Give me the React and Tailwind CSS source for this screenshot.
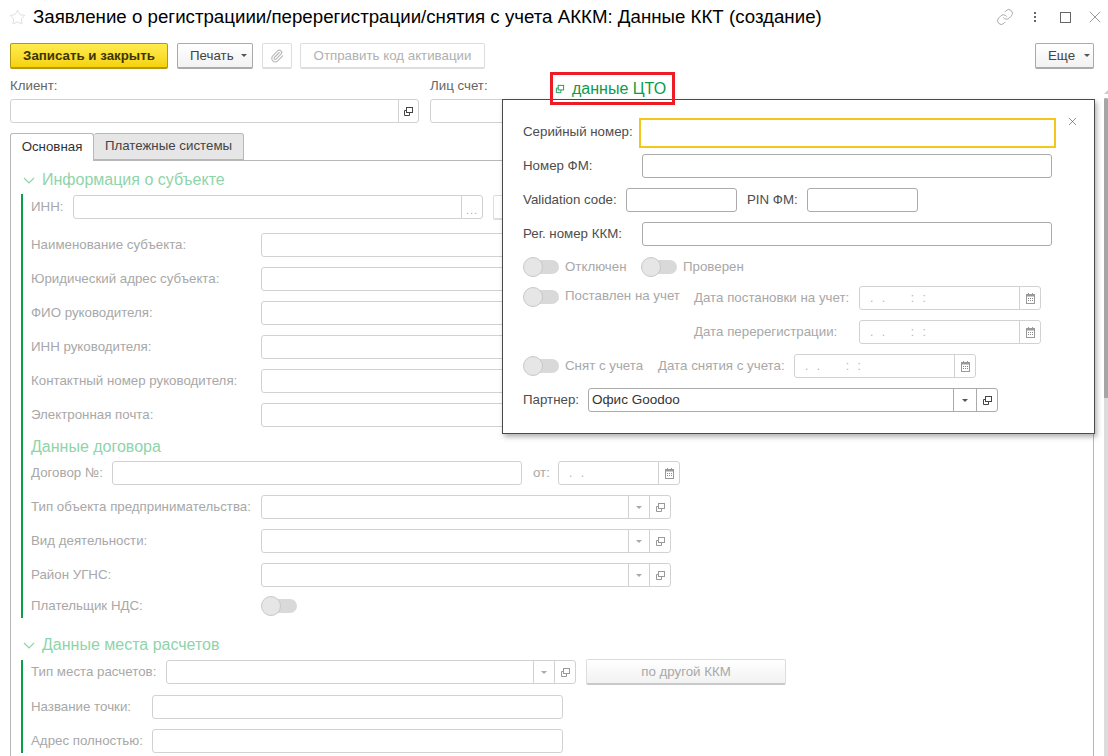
import React from "react";
import { Link, Paperclip, X, Star } from "lucide-react";

const OpenIcon = ({ c = "#444", s = 11 }) => (
  <svg width={s} height={s} viewBox="0 0 11 11" fill="none" stroke={c} strokeWidth="1">
    <rect x="3.5" y="1.5" width="6" height="5" />
    <path d="M3.5 4.5H1.5V9.5H6.5V6.5" />
  </svg>
);
const Caret = ({ c = "#555" }) => (
  <svg width="6" height="3" viewBox="0 0 6 3"><path d="M0 0H6L3 3Z" fill={c} /></svg>
);
const Cal = () => (
  <svg width="9" height="11" viewBox="0 0 9 11" fill="none">
    <rect x="0.5" y="1.5" width="8" height="9" fill="#fff" stroke="#999" />
    <rect x="0.5" y="1.5" width="8" height="2" fill="#999" />
    <path d="M2.5 0V2M6.5 0V2" stroke="#999" />
    <path d="M2 5.5H3M4 5.5H5M6 5.5H7M2 7.5H3M4 7.5H5M6 7.5H7" stroke="#888" />
  </svg>
);
const Chevron = () => (
  <svg width="12" height="7" viewBox="0 0 12 7" fill="none" stroke="#8fd4aa" strokeWidth="1.2"><path d="M1 1L6 6L11 1" /></svg>
);

const Label = ({ children, className = "" }) => (
  <span className={`text-[13.3px] leading-4 whitespace-nowrap text-[#a8a8a8] ${className}`}>{children}</span>
);
const DarkLabel = ({ children, className = "" }) => (
  <span className={`text-[13.3px] leading-4 whitespace-nowrap text-[#4d4d4d] ${className}`}>{children}</span>
);

const DisabledField = ({ className = "", children }) => (
  <div className={`h-6 shrink-0 flex justify-end border border-[#d2d2d2] rounded-[3px] bg-white ${className}`}>{children}</div>
);
const DPart = ({ w = "w-[21px]", children }) => (
  <div className={`${w} h-full flex items-center justify-center border-l border-[#d2d2d2]`}>{children}</div>
);
const EnabledField = ({ className = "", children }) => (
  <div className={`h-6 shrink-0 flex items-center border border-[#ababab] rounded-[3px] bg-white ${className}`}>{children}</div>
);

const Toggle = ({ className = "" }) => (
  <div className={`relative shrink-0 w-[36px] h-5 flex items-center ${className}`}>
    <div className="w-[35px] h-[14px] ml-px rounded-full bg-[#d9d9d9]" />
    <div className="absolute left-0 top-0 w-5 h-5 rounded-full bg-[#e6e6e6] border border-[#c8c8c8]" />
  </div>
);

const DateEmpty = ({ className = "" }) => (
  <DisabledField className={className}>
    <span className="flex-1 pl-[10px] text-[12px] leading-[22px] text-[#b5b5b5] tracking-[2.5px] whitespace-pre">{". .    : :"}</span>
    <DPart><Cal /></DPart>
  </DisabledField>
);

const SelectRow = ({ label, labelW = "w-[230px]", w = "w-[410px]" }) => (
  <div className="flex items-center h-6">
    <Label className={labelW}>{label}</Label>
    <DisabledField className={w}>
      <div className="flex-1" />
      <DPart><Caret c="#aaa" /></DPart>
      <DPart><OpenIcon c="#999" /></DPart>
    </DisabledField>
  </div>
);
const TextRow = ({ label }) => (
  <div className="flex items-center h-6">
    <Label className="w-[230px]">{label}</Label>
    <DisabledField className="w-[600px]" />
  </div>
);

function Popup() {
  return (
    <div className="absolute left-[502px] top-[99px] w-[593px] h-[335px] bg-white border border-[#4a4a4a] shadow-[2px_3px_5px_rgba(0,0,0,0.3)] z-10 pl-[20px] pt-[18px]">
      <button className="absolute left-[563px] top-[15px] text-[#555]"><X size={13} strokeWidth={1.2} /></button>
      <div className="flex items-center h-[30px]">
        <DarkLabel className="w-[116px] -mt-[2px]">Серийный номер:</DarkLabel>
        <div className="w-[417px] h-[30px] border-2 border-[#f5c71a] bg-white" />
      </div>
      <div className="flex items-center mt-[6px] h-6">
        <DarkLabel className="w-[119px]">Номер ФМ:</DarkLabel>
        <EnabledField className="w-[410px]" />
      </div>
      <div className="flex items-center mt-[10px] h-6">
        <DarkLabel className="w-[103px]">Validation code:</DarkLabel>
        <EnabledField className="w-[111px]" />
        <DarkLabel className="ml-[10px] w-[60px]">PIN ФМ:</DarkLabel>
        <EnabledField className="w-[111px]" />
      </div>
      <div className="flex items-center mt-[10px] h-6">
        <DarkLabel className="w-[119px]">Рег. номер ККМ:</DarkLabel>
        <EnabledField className="w-[410px]" />
      </div>
      <div className="flex items-center mt-[11px] h-5">
        <Toggle />
        <Label className="ml-[6px] w-[76px]">Отключен</Label>
        <Toggle />
        <Label className="ml-[6px]">Проверен</Label>
      </div>
      <div className="flex items-start mt-[10px]">
        <Toggle />
        <Label className="ml-[6px] w-[129px] mt-[1px]">Поставлен на учет</Label>
        <div>
          <div className="flex items-center h-6 mt-[-1px]">
            <Label className="w-[165px]">Дата постановки на учет:</Label>
            <DateEmpty className="w-[182px]" />
          </div>
          <div className="flex items-center h-6 mt-[10px]">
            <Label className="w-[165px]">Дата перерегистрации:</Label>
            <DateEmpty className="w-[182px]" />
          </div>
        </div>
      </div>
      <div className="flex items-center mt-[10px] h-6">
        <Toggle />
        <Label className="ml-[6px] w-[93px]">Снят с учета</Label>
        <Label className="w-[136px]">Дата снятия с учета:</Label>
        <DateEmpty className="w-[182px]" />
      </div>
      <div className="flex items-center mt-[10px] h-6">
        <DarkLabel className="w-[65px]">Партнер:</DarkLabel>
        <EnabledField className="w-[410px]">
          <span className="flex-1 pl-[3px] pt-px text-[13.5px] text-[#333]">Офис Goodoo</span>
          <div className="w-[23px] h-full flex items-center justify-center border-l border-[#ababab]"><Caret /></div>
          <div className="w-[21px] h-full flex items-center justify-center border-l border-[#ababab]"><OpenIcon /></div>
        </EnabledField>
      </div>
    </div>
  );
}

export default function App() {
  return (
    <div className="relative w-[1108px] h-[756px] overflow-hidden bg-white font-['Liberation_Sans',Arial,sans-serif]">
      {/* title */}
      <div className="flex items-center h-[34px] pl-[9px] pr-[3px]">
        <Star size={17} strokeWidth={1} className="text-[#d0d0d0]" />
        <h1 className="ml-[7px] text-[18.7px] leading-[22px] text-black font-normal whitespace-nowrap">
          Заявление о регистрациии/перерегистрации/снятия с учета АККМ: Данные ККТ (создание)
        </h1>
        <div className="ml-auto flex items-center">
          <Link size={18} strokeWidth={1.1} className="text-[#999]" />
          <div className="ml-[20px] flex flex-col gap-[2px]">
            <i className="block w-[2px] h-[2px] bg-[#666]" />
            <i className="block w-[2px] h-[2px] bg-[#666]" />
            <i className="block w-[2px] h-[2px] bg-[#666]" />
          </div>
          <div className="ml-[24px] w-[11px] h-[11px] border border-[#666]" />
          <X size={20} strokeWidth={0.8} className="ml-[14px] text-[#666]" />
        </div>
      </div>
      {/* toolbar */}
      <div className="flex items-center h-[26px] mt-[9px] pl-[10px] pr-[14px]">
        <button className="w-[158px] h-[26px] rounded-[2px] border border-[#b09a14] border-b-2 bg-linear-to-b from-[#ffec4d] to-[#f6d200] text-[13.3px] font-bold text-[#3d3500]">Записать и закрыть</button>
        <button className="ml-[9px] w-[76px] h-[26px] flex items-center pl-[12px] gap-[7px] rounded-[2px] border border-[#aaa] border-b-2 bg-linear-to-b from-white to-[#f2f2f2] text-[13.3px] text-[#444]">Печать <Caret /></button>
        <button className="ml-[9px] w-[30px] h-[26px] flex items-center justify-center rounded-[2px] border border-[#ddd] border-b-2 bg-white text-[#bbb]"><Paperclip size={14} /></button>
        <button className="ml-[8px] w-[185px] h-[26px] rounded-[2px] border border-[#ddd] border-b-2 bg-white text-[13.3px] text-[#b0b0b0]">Отправить код активации</button>
        <button className="ml-auto w-[59px] h-[26px] flex items-center pl-[12px] gap-[9px] rounded-[2px] border border-[#aaa] border-b-2 bg-linear-to-b from-white to-[#f2f2f2] text-[13.3px] text-[#444]">Еще <Caret /></button>
      </div>
      {/* client row */}
      <div className="flex pl-[10px] gap-[11px] mt-[9px]">
        <div className="w-[409px]">
          <DarkLabel className="block text-[#666]">Клиент:</DarkLabel>
          <DisabledField className="mt-[5px] w-[409px]"><DPart w="w-[20px]"><OpenIcon /></DPart></DisabledField>
        </div>
        <div className="w-[300px]">
          <DarkLabel className="block text-[#666]">Лиц счет:</DarkLabel>
          <DisabledField className="mt-[5px] w-[300px]" />
        </div>
      </div>
      {/* tabs */}
      <div className="flex ml-[10px] mt-[10px] h-[28px] relative z-[1]">
        <div className="w-[84px] h-[28px] flex items-center justify-center pb-[2px] border border-b-0 border-[#b8b8b8] rounded-t-[3px] bg-white text-[13.3px] text-[#333]">Основная</div>
        <div className="w-[150px] h-[27px] flex items-center justify-center pb-[1px] border border-l-0 border-[#b8b8b8] rounded-t-[3px] bg-[#e6e6e6] text-[13.3px] text-[#444]">Платежные системы</div>
      </div>
      {/* panel */}
      <div className="ml-[10px] mt-[-1px] w-[1084px] h-[700px] border border-[#b8b8b8] pl-[10px]">
        <div className="flex items-center h-5 mt-[9px] pl-[2px]">
          <Chevron />
          <span className="ml-[7px] text-[16px] text-[#8fd4aa] whitespace-nowrap">Информация о субъекте</span>
        </div>
        <div className="mt-[4px] border-l-2 border-[#0aa04b] pl-[8px] pt-px pb-[1px] flex flex-col gap-[10px] h-[424px]">
          <div className="flex items-center h-6">
            <Label className="w-[42px]">ИНН:</Label>
            <DisabledField className="w-[410px]"><DPart><span className="text-[11px] text-[#aaa] tracking-[1px] leading-none mt-[6px]">...</span></DPart></DisabledField>
            <div className="ml-[10px] w-[60px] h-[25px] rounded-[2px] border border-[#ddd] border-b-2 bg-white" />
          </div>
          <div className="flex flex-col gap-[10px] mt-[4px]">
            <TextRow label="Наименование субъекта:" />
            <TextRow label="Юридический адрес субъекта:" />
            <TextRow label="ФИО руководителя:" />
            <TextRow label="ИНН руководителя:" />
            <TextRow label="Контактный номер руководителя:" />
            <TextRow label="Электронная почта:" />
          </div>
          <div className="text-[16px] leading-5 text-[#8fd4aa] -mb-[6px]">Данные договора</div>
          <div className="flex items-center h-6">
            <Label className="w-[81px]">Договор №:</Label>
            <DisabledField className="w-[410px]" />
            <Label className="ml-[11px] w-[25px]">от:</Label>
            <DisabledField className="w-[122px]">
              <span className="flex-1 pl-[10px] text-[12px] leading-[22px] text-[#b5b5b5] tracking-[2.5px]">. .</span>
              <DPart><Cal /></DPart>
            </DisabledField>
          </div>
          <SelectRow label="Тип объекта предпринимательства:" />
          <SelectRow label="Вид деятельности:" />
          <SelectRow label="Район УГНС:" />
          <div className="flex items-center h-6 -mt-[2px]">
            <Label className="w-[230px]">Плательщик НДС:</Label>
            <Toggle />
          </div>
        </div>
        <div className="flex items-center h-5 mt-[17px] pl-[2px]">
          <Chevron />
          <span className="ml-[7px] text-[16px] text-[#8fd4aa] whitespace-nowrap">Данные места расчетов</span>
        </div>
        <div className="mt-[5px] border-l-2 border-[#0aa04b] pl-[8px] flex flex-col gap-[11px]">
          <div className="flex items-center h-6">
            <Label className="w-[135px]">Тип места расчетов:</Label>
            <DisabledField className="w-[410px]">
              <div className="flex-1" />
              <DPart><Caret c="#aaa" /></DPart>
              <DPart><OpenIcon c="#999" /></DPart>
            </DisabledField>
            <button className="ml-[10px] w-[200px] h-[26px] rounded-[2px] border border-[#ddd] border-b-2 border-b-[#c8c8c8] bg-linear-to-b from-white to-[#f2f2f2] text-[13.3px] text-[#a8a8a8]">по другой ККМ</button>
          </div>
          <div className="flex items-center h-6">
            <Label className="w-[121px]">Название точки:</Label>
            <DisabledField className="w-[411px]" />
          </div>
          <div className="flex items-center h-6 -mt-px">
            <Label className="w-[121px]">Адрес полностью:</Label>
            <DisabledField className="w-[411px]" />
          </div>
        </div>
      </div>
      {/* scrollbar */}
      <div className="absolute right-0 top-[98px] bottom-0 w-[4px] bg-[#dcdcdc]">
        <div className="w-full h-[300px] bg-[#a6a6a6] rounded-t-[2px]" />
      </div>
      <div className="absolute right-0 top-[90px] w-0 h-0 border-l-[4px] border-l-transparent border-b-[4px] border-b-[#ccc]" />
      <Popup />
      {/* link + highlight */}
      <div className="absolute left-[550px] top-[72px] w-[125px] h-[33px] border-[3px] border-[#ed1c24] z-20 flex items-center pl-[2px]">
        <OpenIcon c="#0a9c4a" s={10} />
        <span className="ml-[7px] text-[16px] text-[#0a9c4a] whitespace-nowrap">данные ЦТО</span>
      </div>
    </div>
  );
}
